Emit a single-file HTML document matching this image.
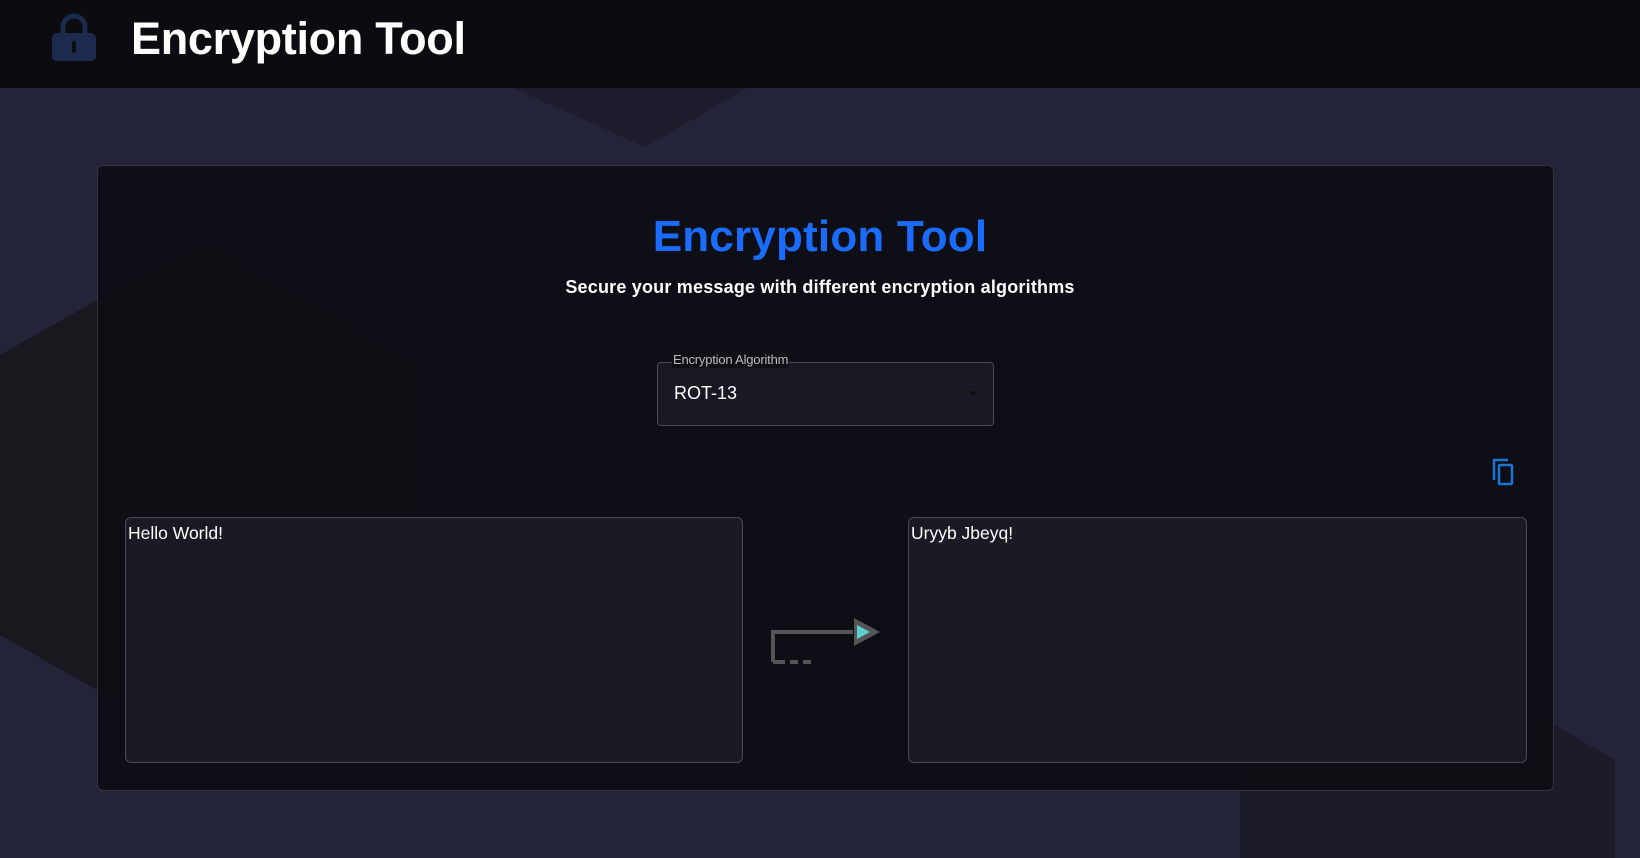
<!DOCTYPE html>
<html><head><style>
*{box-sizing:border-box;margin:0;padding:0}
body{width:1640px;height:858px;overflow:hidden;background:#23233a;font-family:"Liberation Sans",Arial,sans-serif;position:relative}
.bg{position:absolute;left:0;top:0}
header{position:absolute;left:0;top:0;width:1640px;height:88px;background:#0b0b10;}
header h1{position:absolute;left:131px;top:13px;font-size:45px;color:#fff;font-weight:bold;letter-spacing:-0.3px}
.card{position:absolute;left:97px;top:165px;width:1457px;height:626px;background:rgba(14,15,21,0.96);border:1px solid #34343c;border-radius:6px}
.t{position:absolute;width:100%;text-align:center}
.sel{position:absolute;left:657px;top:362px;width:337px;height:64px;border:1px solid #4a4a52;border-radius:4px;background:#191923}
.lab{position:absolute;left:672px;top:352px;font-size:13px;color:#bbb;background:#0f1016;padding:0 1px;line-height:16px;letter-spacing:-0.2px}
.ta{position:absolute;top:517px;height:246px;border:1px solid #4a4a55;border-radius:6px;background:#1a1a25;color:#fff;font-size:17.5px;padding:5px 2px}
</style></head><body>
<svg class="bg" width="1640" height="858">
<polygon points="450,0 900,0 645,147 450,60" fill="#1d1d2e"/>
<polygon points="0,355 203,240 424,365 424,690 203,750 0,635" fill="#18181f"/>
<polygon points="1240,765 1430,652 1615,760 1615,858 1240,858" fill="#1c1c29"/>
</svg>
<header><svg style="position:absolute;left:50px;top:12px" width="48" height="50" viewBox="0 0 48 50"><path d="M13 24V15a11 11 0 0 1 22 0v9" fill="none" stroke="#1c2a4d" stroke-width="5"/><rect x="2" y="21" width="44" height="28" rx="5" fill="#1c2a4d"/><rect x="22" y="29" width="4" height="12" rx="2" fill="#0b0b10"/></svg><h1>Encryption Tool</h1></header>
<div class="card"></div>
<div class="t" style="top:212px;font-size:44px;font-weight:bold;color:#1a6bff;letter-spacing:0.2px">Encryption Tool</div>
<div class="t" style="top:277px;font-size:18px;font-weight:bold;color:#fff;letter-spacing:0.2px">Secure your message with different encryption algorithms</div>
<div class="sel"><span style="position:absolute;left:16px;top:20px;color:#fff;font-size:18px">ROT-13</span><span style="position:absolute;right:15px;top:28px;width:0;height:0;border-left:5px solid transparent;border-right:5px solid transparent;border-top:5px solid #111"></span></div>
<div class="lab">Encryption Algorithm</div>
<svg style="position:absolute;left:1492px;top:458px" width="24" height="28" viewBox="0 0 24 28"><path d="M2 22V2h14" fill="none" stroke="#1976d2" stroke-width="2.5"/><rect x="7" y="7" width="13" height="19" rx="1" fill="none" stroke="#1976d2" stroke-width="2.5"/></svg>
<div class="ta" style="left:125px;width:618px">Hello World!</div>
<div class="ta" style="left:908px;width:619px">Uryyb Jbeyq!</div>
<svg style="position:absolute;left:768px;top:612px" width="115" height="60" viewBox="0 0 115 60"><path d="M5 50V20h80" fill="none" stroke="#555" stroke-width="4"/><path d="M5 50h12M22 50h8M35 50h8" stroke="#555" stroke-width="4"/><polygon points="86,6 112,20 86,34" fill="#555"/><polygon points="89,13 102,20 89,27" fill="#5ecfcf"/></svg>
</body></html>
